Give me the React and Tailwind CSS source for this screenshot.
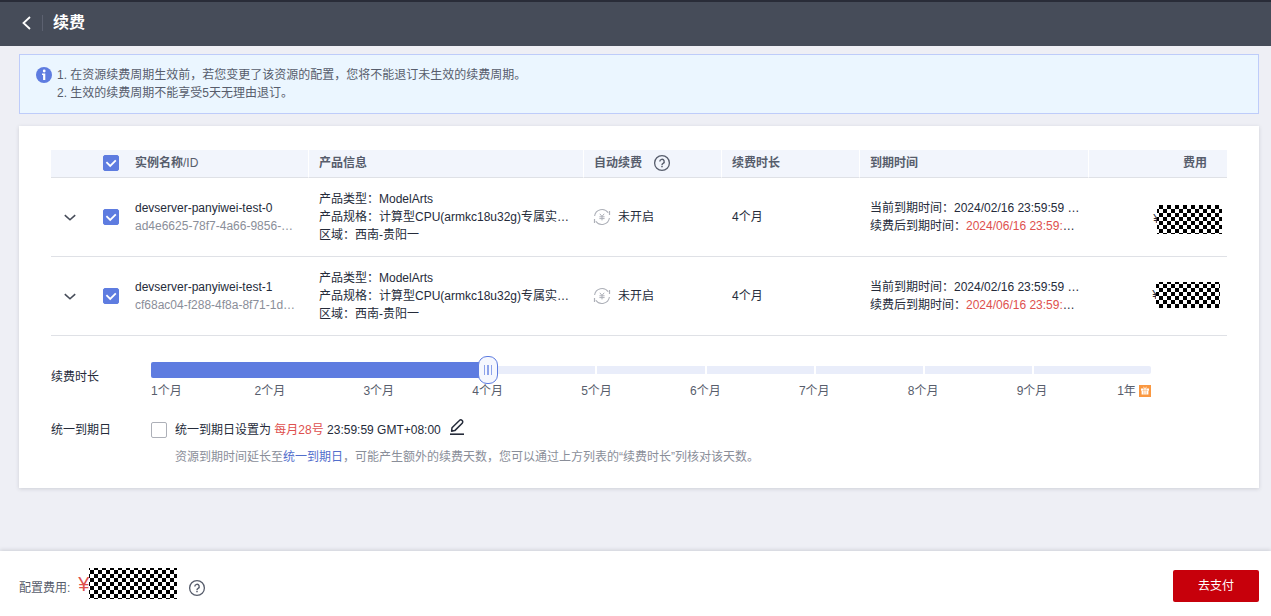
import { useState } from 'react'

const MONTHS = ['1个月', '2个月', '3个月', '4个月', '5个月', '6个月', '7个月', '8个月', '9个月', '1年']

const COLUMNS = ['产品信息', '自动续费', '续费时长', '到期时间']

const INSTANCES = [
  {
    name: 'devserver-panyiwei-test-0',
    id: 'ad4e6625-78f7-4a66-9856-…',
    maskClass: 'h-[29px] w-[65px] bg-position-[-2px_0px]',
    padClass: 'pr-[5px] pt-1',
  },
  {
    name: 'devserver-panyiwei-test-1',
    id: 'cf68ac04-f288-4f8a-8f71-1d…',
    maskClass: 'h-[26px] w-[64px] bg-position-[-1px_-2px]',
    padClass: 'pr-[7px] pb-0.5',
  },
]

function Checkbox({ checked, onChange, label }) {
  return (
    <span className="relative block size-4 shrink-0">
      <input
        type="checkbox"
        aria-label={label}
        checked={checked}
        onChange={(e) => onChange(e.target.checked)}
        className="block size-4 appearance-none rounded-[2px] border border-[#adb0b8] bg-white checked:border-[#5e7ce0] checked:bg-[#5e7ce0]"
      />
      {checked && (
        <svg viewBox="0 0 16 16" className="pointer-events-none absolute inset-0 size-4" fill="none">
          <path d="M3.4 7.2 7.2 11l5.6-5.6" stroke="#fff" strokeWidth="1.8" />
        </svg>
      )}
    </span>
  )
}

function HelpIcon() {
  return (
    <svg viewBox="0 0 16 16" className="block size-4 shrink-0 overflow-visible" fill="none" stroke="#575d6c">
      <circle cx="8" cy="8" r="7.4" strokeWidth="1.3" />
      <path d="M5.8 6.5a2.2 2.2 0 1 1 3.3 1.9c-.8.4-1.1.7-1.1 1.5" strokeWidth="1.4" />
      <path d="M8 10.8v1.5" strokeWidth="1.5" />
    </svg>
  )
}

function InfoIcon() {
  return (
    <svg viewBox="0 0 16 16" className="block size-4 shrink-0">
      <circle cx="8" cy="8" r="8" fill="#5e7ce0" />
      <circle cx="8.2" cy="4" r="1.4" fill="#fff" />
      <path d="M6 6.4h3.3V13H7.1V8H6z" fill="#fff" />
    </svg>
  )
}

function RenewIcon() {
  return (
    <svg viewBox="0 0 16 16" className="block size-4 shrink-0 overflow-visible" fill="none" stroke="#adb0b8">
      <path d="M.6 7A7.5 7.5 0 0 1 14.2 3.8M15.4 9A7.5 7.5 0 0 1 1.8 12.2" strokeWidth="1.1" />
      <path d="M15.5 2v4M.5 14v-4" strokeWidth="1.2" />
      <path d="M5.8 4.8 8 7.4l2.2-2.6M8 7.4v4M5.4 7.8h5.2M5.4 9.6h5.2" />
    </svg>
  )
}

function EditIcon() {
  return (
    <svg viewBox="0 0 16 18" className="block h-[18px] w-4" fill="none" stroke="#252b3a">
      <path d="M2.6 13.2 3 9.8l7.4-7.3a1.9 1.9 0 0 1 2.8 2.7L5.8 12.6z" strokeWidth="1.5" strokeLinejoin="round" />
      <path d="M1 16.2h14" strokeWidth="1.6" />
    </svg>
  )
}

function GiftIcon() {
  return (
    <svg viewBox="0 0 12 12" className="block size-3 shrink-0">
      <rect width="12" height="12" fill="#fa9841" />
      <path d="M2 3.5h8v2.2H2zM2.6 6.1h6.8v3.5H2.6z" fill="#fff" />
      <path d="M4.9 3.5v6M7.1 3.5v6" stroke="#fa9841" strokeWidth=".6" />
      <path d="M6 3.6 4.4 2.2M6 3.6l1.6-1.4" stroke="#fff" strokeWidth=".9" />
    </svg>
  )
}

// Hides an amount behind a checkerboard
function Mask({ className }) {
  return (
    <span
      className={`relative block shrink-0 bg-[conic-gradient(#000_25%,#fff_0_50%,#000_0_75%,#fff_0)] bg-size-[8px_8px] ${className}`}
    />
  )
}

function DurationSlider({ value, onChange }) {
  const steps = MONTHS.length - 1

  return (
    <div className="mr-[76px] flex-1">
      <div className="relative flex h-6 items-center">
        <div className="flex h-2 flex-1 overflow-hidden rounded-[2px] bg-[#e9edfa] px-[10px]">
          {MONTHS.slice(1).map((m, i) => (
            <span key={m} className={i === 0 ? 'flex-1' : 'flex-1 border-l-2 border-white'} />
          ))}
        </div>
        <div
          className="absolute left-0 h-4 rounded-l-[2px] bg-[#5e7ce0]"
          style={{ width: `calc(10px + (100% - 20px) * ${value / steps})` }}
        />
        <input
          id="duration"
          type="range"
          min="0"
          max={steps}
          value={value}
          onChange={(e) => onChange(Number(e.target.value))}
          className="absolute -top-0.5 left-0 h-7 w-full cursor-pointer appearance-none bg-transparent outline-none [&::-webkit-slider-thumb]:h-7 [&::-webkit-slider-thumb]:w-5 [&::-webkit-slider-thumb]:appearance-none [&::-webkit-slider-thumb]:rounded-[9px] [&::-webkit-slider-thumb]:border [&::-webkit-slider-thumb]:border-[#5e7ce0] [&::-webkit-slider-thumb]:bg-[#f5f7fe] [&::-webkit-slider-thumb]:bg-[linear-gradient(90deg,#8ea3ea_0_1px,transparent_0_3px,#8ea3ea_0_5px,transparent_0_7px,#8ea3ea_0)] [&::-webkit-slider-thumb]:bg-size-[8px_10px] [&::-webkit-slider-thumb]:bg-center [&::-webkit-slider-thumb]:bg-no-repeat"
        />
      </div>
      <div className="flex justify-between text-[#575d6c]">
        {MONTHS.map((m, i) => (
          <span
            key={m}
            className={`flex w-5 items-center whitespace-nowrap ${
              i === 0 ? 'justify-start' : i === steps ? 'justify-end gap-[3px]' : 'justify-center'
            }`}
          >
            <span>{m}</span>
            {i === steps && <GiftIcon />}
          </span>
        ))}
      </div>
    </div>
  )
}

export default function App() {
  const [selected, setSelected] = useState([true, true])
  const [duration, setDuration] = useState(3)
  const [unified, setUnified] = useState(false)

  const toggle = (index, checked) => setSelected((prev) => prev.map((v, i) => (i === index ? checked : v)))

  return (
    <div className="flex min-h-screen flex-col bg-[#eeeff5] font-['Liberation_Sans','Noto_Sans_CJK_SC',sans-serif] text-[12px] leading-[18px] text-[#252b3a]">
      {/* Header */}
      <header className="flex h-[46px] items-center border-t-2 border-[#292c38] bg-[#464c59] pb-0.5 pl-5">
        <button type="button" aria-label="返回" className="flex h-6 w-[22px] items-center">
          <svg viewBox="0 0 14 14" className="size-[14px]" fill="none">
            <path d="M10 1 3.5 7l6.5 6" stroke="#fff" strokeWidth="1.8" />
          </svg>
        </button>
        <span className="h-4 w-px bg-[#5c6170]" />
        <h1 className="ml-[10px] text-[16px] leading-6 font-bold text-white">续费</h1>
      </header>

      {/* Notice */}
      <div className="mt-2 mr-3 ml-[19px] flex gap-[5px] border border-[#beccfa] bg-[#ebf6ff] px-4 py-[11px] text-[#575d6c]">
        <span className="flex h-[18px] items-center">
          <InfoIcon />
        </span>
        <div>
          <p>1. 在资源续费周期生效前，若您变更了该资源的配置，您将不能退订未生效的续费周期。</p>
          <p>2. 生效的续费周期不能享受5天无理由退订。</p>
        </div>
      </div>

      {/* Main content */}
      <main className="mt-3 mr-3 mb-6 ml-[19px] bg-white px-8 pt-6 pb-[22px] shadow-[0_1px_4px_rgba(37,43,58,0.16)]">
        <table className="w-full table-fixed border-separate border-spacing-0 text-left">
          <colgroup>
            <col className="w-[42px]" />
            <col className="w-[32px]" />
            <col className="w-[184px]" />
            <col className="w-[275px]" />
            <col className="w-[138px]" />
            <col className="w-[138px]" />
            <col className="w-[229px]" />
            <col className="w-[138px]" />
          </colgroup>
          <thead>
            <tr className="h-7 text-[#575d6c] [&>th]:border-b [&>th]:border-b-[#dfe1e6] [&>th]:bg-[#f2f5fc] [&>th]:bg-clip-padding [&>th]:pt-0 [&>th]:pb-0.5">
              <th />
              <th className="pl-[10px]">
                <Checkbox
                  label="全选"
                  checked={selected.every(Boolean)}
                  onChange={(checked) => setSelected(selected.map(() => checked))}
                />
              </th>
              <th className="border-r border-r-white pl-[10px] font-bold">
                实例名称<span className="font-normal">/ID</span>
              </th>
              {COLUMNS.map((title) => (
                <th key={title} className="border-r border-r-white pl-[10px] font-bold">
                  <span className="flex items-center gap-3">
                    {title}
                    {title === '自动续费' && <HelpIcon />}
                  </span>
                </th>
              ))}
              <th className="pr-5 text-right font-bold">费用</th>
            </tr>
          </thead>
          <tbody>
            {INSTANCES.map((item, i) => (
              <tr key={item.name} className="[&>td]:border-b [&>td]:border-[#dfe1e6] [&>td]:py-3">
                <td>
                  <button type="button" aria-label="展开" className="ml-3 flex size-[14px] items-center justify-center">
                    <svg viewBox="0 0 12 12" className="size-3" fill="none">
                      <path d="m.8 4.2 5.2 4.6 5.2-4.6" stroke="#464c59" strokeWidth="1.6" />
                    </svg>
                  </button>
                </td>
                <td className="pl-[10px]">
                  <Checkbox label={item.name} checked={selected[i]} onChange={(checked) => toggle(i, checked)} />
                </td>
                <td className="pl-[10px] whitespace-nowrap">
                  <p>{item.name}</p>
                  <p className="text-[#8a8e99]">{item.id}</p>
                </td>
                <td className="pl-[10px] whitespace-nowrap">
                  <p>产品类型：ModelArts</p>
                  <p>产品规格：计算型CPU(armkc18u32g)专属实…</p>
                  <p>区域：西南-贵阳一</p>
                </td>
                <td className="pl-[10px]">
                  <span className="flex items-center gap-2">
                    <RenewIcon />
                    未开启
                  </span>
                </td>
                <td className="pl-[10px]">{MONTHS[duration]}</td>
                <td className="pl-[10px] whitespace-nowrap">
                  <p>当前到期时间：2024/02/16 23:59:59 …</p>
                  <p>
                    续费后到期时间：<span className="text-[#de504e]">2024/06/16 23:59:</span>…
                  </p>
                </td>
                <td>
                  <div className={`flex items-center justify-end ${item.padClass}`}>
                    <span className="-mr-[3px]">¥</span>
                    <Mask className={item.maskClass} />
                  </div>
                </td>
              </tr>
            ))}
          </tbody>
        </table>

        <div className="mt-[22px] flex items-start">
          <label htmlFor="duration" className="mt-[10px] w-[100px]">
            续费时长
          </label>
          <DurationSlider value={duration} onChange={setDuration} />
        </div>

        <div className="mt-[21px] flex items-start">
          <span className="w-[100px]">统一到期日</span>
          <div>
            <div className="flex h-[18px] items-center">
              <Checkbox label="统一到期日" checked={unified} onChange={setUnified} />
              <p className="ml-2">
                统一到期日设置为 <span className="text-[#de504e]">每月28号</span> 23:59:59 GMT+08:00
              </p>
              <button type="button" aria-label="编辑" className="mb-1.5 ml-2">
                <EditIcon />
              </button>
            </div>
            <p className="mt-[9px] ml-6 text-[#8a8e99]">
              资源到期时间延长至
              <a href="#unified" className="text-[#526ecc]">
                统一到期日
              </a>
              ，可能产生额外的续费天数，您可以通过上方列表的“续费时长”列核对该天数。
            </p>
          </div>
        </div>
      </main>

      {/* Payment bar */}
      <footer className="mt-auto flex h-[65px] items-center justify-between bg-white pr-3 pl-[19px] shadow-[0_-1px_4px_rgba(37,43,58,0.16)]">
        <div className="flex items-center text-[#575d6c]">
          <span className="pt-2">配置费用:</span>
          <span className="ml-2 text-[20px] leading-6 text-[#de504e]">¥</span>
          <Mask className="h-[31px] w-[88px] bg-position-[1px_-2px]" />
          <button type="button" aria-label="费用说明" className="ml-3 pt-2">
            <HelpIcon />
          </button>
        </div>
        <button type="button" className="mt-1 h-8 w-[86px] rounded-[2px] bg-[#c7000b] text-white">
          去支付
        </button>
      </footer>
    </div>
  )
}
